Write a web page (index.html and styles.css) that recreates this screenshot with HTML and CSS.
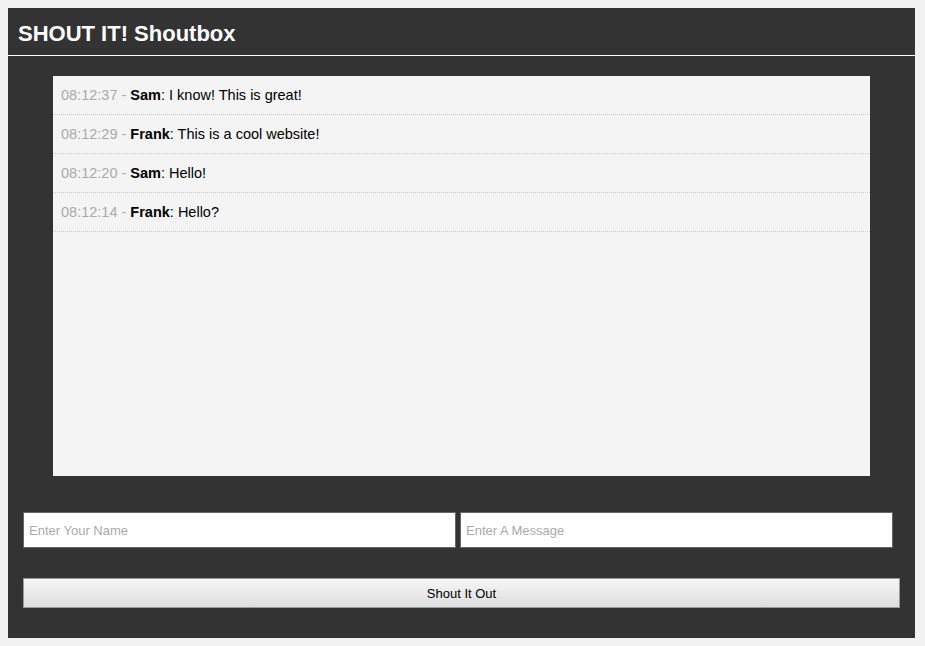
FILE: index.html
```html
<!DOCTYPE html>
<html>
<head>
<meta charset="utf-8">
<title>SHOUT IT! Shoutbox</title>
<link rel="stylesheet" href="styles.css">
</head>
<body>
<div class="container">
  <header class="header">
    <h1>SHOUT IT! Shoutbox</h1>
  </header>
  <div class="shouts">
    <ul>
      <li><span class="time">08:12:37 - </span><strong>Sam</strong>: I know! This is great!</li>
      <li><span class="time">08:12:29 - </span><strong>Frank</strong>: This is a cool website!</li>
      <li><span class="time">08:12:20 - </span><strong>Sam</strong>: Hello!</li>
      <li><span class="time">08:12:14 - </span><strong>Frank</strong>: Hello?</li>
    </ul>
  </div>
  <form class="input">
    <div class="fields">
      <input type="text" class="field" placeholder="Enter Your Name">
      <input type="text" class="field" placeholder="Enter A Message">
    </div>
    <button type="button" class="shout-btn">Shout It Out</button>
  </form>
</div>
</body>
</html>
```

FILE: styles.css
```css
html, body {
  margin: 0;
  padding: 0;
}
body {
  background: #f2f2f2;
  font-family: "Liberation Sans", Arial, sans-serif;
  padding: 8px 10px 8px 8px;
}
.container {
  width: 907px;
  height: 630px;
  background: #333333;
  box-sizing: border-box;
}
.header {
  height: 48px;
  border-bottom: 1px solid #ffffff;
  box-sizing: border-box;
  padding: 0 10px;
  display: flex;
  align-items: center;
}
.header h1 {
  margin: 0;
  color: #ffffff;
  font-size: 22px;
  font-weight: bold;
  line-height: 26px;
  padding-top: 5px;
}
.shouts {
  width: 817px;
  height: 400px;
  margin: 20px auto 0;
  background: #f4f4f4;
}
.shouts ul {
  list-style: none;
  margin: 0;
  padding: 0;
}
.shouts li {
  height: 38px;
  line-height: 38px;
  padding-left: 8px;
  border-bottom: 1px dotted #cccccc;
  font-size: 14.5px;
  color: #000000;
}
.shouts .time {
  color: #aaaaaa;
}
.input {
  padding: 36px 15px 0;
  display: flex;
  flex-direction: column;
  gap: 30px;
}
.fields {
  display: flex;
  gap: 4px;
}
.field {
  width: 433px;
  height: 36px;
  box-sizing: border-box;
  border: 1px solid #666666;
  background: #ffffff;
  padding: 0 5px;
  font-family: "Liberation Sans", Arial, sans-serif;
  font-size: 13px;
  outline: none;
  margin: 0;
}
.field::placeholder {
  color: #aaaaaa;
}
.shout-btn {
  width: 877px;
  height: 30px;
  box-sizing: border-box;
  border: 1px solid #9a9a9a;
  background: linear-gradient(to bottom, #f6f6f6, #dedede);
  font-family: "Liberation Sans", Arial, sans-serif;
  font-size: 13px;
  color: #000000;
  margin: 0;
  padding: 0;
  cursor: pointer;
}
```
